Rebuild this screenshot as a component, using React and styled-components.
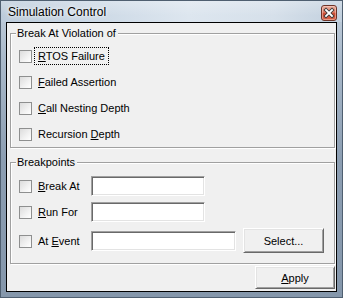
import React from "react";
import styled, { createGlobalStyle } from "styled-components";

const GlobalStyle = createGlobalStyle`
  html, body {
    margin: 0;
    padding: 0;
    background: #ffffff;
  }
  * {
    box-sizing: border-box;
  }
`;

export default function App() {
  return (
    <>
      <GlobalStyle />
      <Window>
        <TitleBar>
          <Caption>Simulation Control</Caption>
          <CloseButton aria-label="Close">
            <svg width="14" height="14" viewBox="0 0 14 14">
              <path d="M4 4 L10 10 M10 4 L4 10" stroke="#3b3b3b" strokeWidth="3.6" strokeLinecap="square" />
              <path d="M4 4 L10 10 M10 4 L4 10" stroke="#ffffff" strokeWidth="1.8" strokeLinecap="square" />
            </svg>
          </CloseButton>
        </TitleBar>
        <Client>
          <Group>
            <GroupTitle>Break At Violation of</GroupTitle>
            <Rows $gap={8}>
              <CheckRow>
                <Check type="checkbox" />
                <Label $focused>
                  <u>R</u>TOS Failure
                </Label>
              </CheckRow>
              <CheckRow>
                <Check type="checkbox" />
                <Label>
                  <u>F</u>ailed Assertion
                </Label>
              </CheckRow>
              <CheckRow>
                <Check type="checkbox" />
                <Label>
                  <u>C</u>all Nesting Depth
                </Label>
              </CheckRow>
              <CheckRow>
                <Check type="checkbox" />
                <Label>
                  Recursion <u>D</u>epth
                </Label>
              </CheckRow>
            </Rows>
          </Group>

          <Group $spaced>
            <GroupTitle>Breakpoints</GroupTitle>
            <Rows $gap={6} $bottom={10}>
              <FieldRow>
                <Check type="checkbox" />
                <Label $width={57}>
                  <u>B</u>reak At
                </Label>
                <TextField $width={114} />
              </FieldRow>
              <FieldRow>
                <Check type="checkbox" />
                <Label $width={57}>
                  <u>R</u>un For
                </Label>
                <TextField $width={114} />
              </FieldRow>
              <FieldRow>
                <Check type="checkbox" />
                <Label $width={57}>
                  At <u>E</u>vent
                </Label>
                <TextField $width={145} />
                <PushButton $width={81} $height={25}>
                  Select...
                </PushButton>
              </FieldRow>
            </Rows>
          </Group>

          <Footer>
            <PushButton $width={80} $height={23}>
              <u>A</u>pply
            </PushButton>
          </Footer>
        </Client>
      </Window>
    </>
  );
}

const Window = styled.div`
  width: 343px;
  height: 298px;
  display: flex;
  flex-direction: column;
  border: 1px solid #4f5f70;
  background: linear-gradient(to bottom, #c3d0dd 0px, #a9b9ca 60px, #8c9eb2 160px, #8597ab 100%);
`;

const TitleBar = styled.div`
  height: 21px;
  flex: none;
  display: flex;
  align-items: center;
  justify-content: space-between;
  padding: 1px 5px 0 7px;
  background:
    linear-gradient(to bottom, rgba(255, 255, 255, 0.25), rgba(255, 255, 255, 0) 70%),
    linear-gradient(to right, #bccbda 0%, #cbd8e5 25%, #dde6ef 55%, #d6e0ea 80%, #c2d0de 100%);
`;

const Caption = styled.span`
  font-family: "Liberation Sans", Arial, sans-serif;
  font-size: 12px;
  line-height: 15px;
  color: #000000;
  text-shadow: 0 0 6px rgba(255, 255, 255, 0.95), 0 0 3px rgba(255, 255, 255, 0.9);
`;

const CloseButton = styled.div`
  width: 16px;
  height: 16px;
  margin-top: 2px;
  border: 1px solid #6e3326;
  border-radius: 3px;
  display: flex;
  align-items: center;
  justify-content: center;
  background: linear-gradient(to bottom, #eab0a0 0%, #dc7a62 45%, #c9462c 55%, #d9674c 100%);
  box-shadow: inset 0 0 0 1px rgba(255, 220, 210, 0.45);
`;

const Client = styled.div`
  flex: 1;
  margin: 0 5px 5px 5px;
  border: 1px solid #000000;
  background: #f0f0f0;
  padding: 10px 1px 0 3px;
  display: flex;
  flex-direction: column;
  font-family: "Liberation Sans", Arial, sans-serif;
  font-size: 11px;
  color: #000000;
`;

const Group = styled.div`
  margin-top: ${(p) => (p.$spaced ? "14px" : "0")};
  border: 1px solid #a0a0a0;
  box-shadow: inset 1px 1px 0 #ffffff, 1px 1px 0 #ffffff;
  padding: 0 8px 0 8px;
  display: flex;
  flex-direction: column;
`;

const GroupTitle = styled.div`
  width: fit-content;
  margin: -7px 0 0 -3px;
  padding: 0 2px 0 1px;
  line-height: 13px;
  background: #f0f0f0;
`;

const Rows = styled.div`
  display: flex;
  flex-direction: column;
  gap: ${(p) => p.$gap}px;
  margin-top: 7px;
  padding-bottom: ${(p) => p.$bottom ?? 4}px;
`;

const CheckRow = styled.div`
  height: 18px;
  display: flex;
  align-items: center;
`;

const FieldRow = styled.div`
  display: flex;
  align-items: center;
  min-height: 20px;
`;

const Check = styled.input`
  appearance: none;
  -webkit-appearance: none;
  width: 13px;
  height: 13px;
  margin: 1px 2px 0 0;
  flex: none;
  border: 1px solid #8e8f8f;
  background: linear-gradient(135deg, #dcdcdc 0%, #f2f2f2 60%, #ffffff 100%);
`;

const Label = styled.span`
  flex: none;
  width: ${(p) => (p.$width ? `${p.$width}px` : "auto")};
  padding: 1px 3px;
  line-height: 14px;
  border: 1px dotted ${(p) => (p.$focused ? "#000000" : "transparent")};
  white-space: nowrap;
`;

const TextField = styled.div`
  width: ${(p) => p.$width}px;
  height: 20px;
  flex: none;
  background: #ffffff;
  border-style: solid;
  border-width: 1px;
  border-color: #a0a0a0 #ffffff #ffffff #a0a0a0;
  box-shadow: inset 1px 1px 0 #696969, inset -1px -1px 0 #e3e3e3;
`;

const PushButton = styled.div`
  width: ${(p) => p.$width}px;
  height: ${(p) => p.$height}px;
  flex: none;
  margin-left: ${(p) => (p.$height === 25 ? "7px" : "0")};
  display: flex;
  align-items: center;
  justify-content: center;
  background: #f0f0f0;
  border-style: solid;
  border-width: 1px;
  border-color: #ffffff #696969 #696969 #ffffff;
  box-shadow: inset 1px 1px 0 #e3e3e3, inset -1px -1px 0 #a0a0a0;
  padding-top: 1px;
`;

const Footer = styled.div`
  display: flex;
  justify-content: flex-end;
  margin-top: 2px;
`;
